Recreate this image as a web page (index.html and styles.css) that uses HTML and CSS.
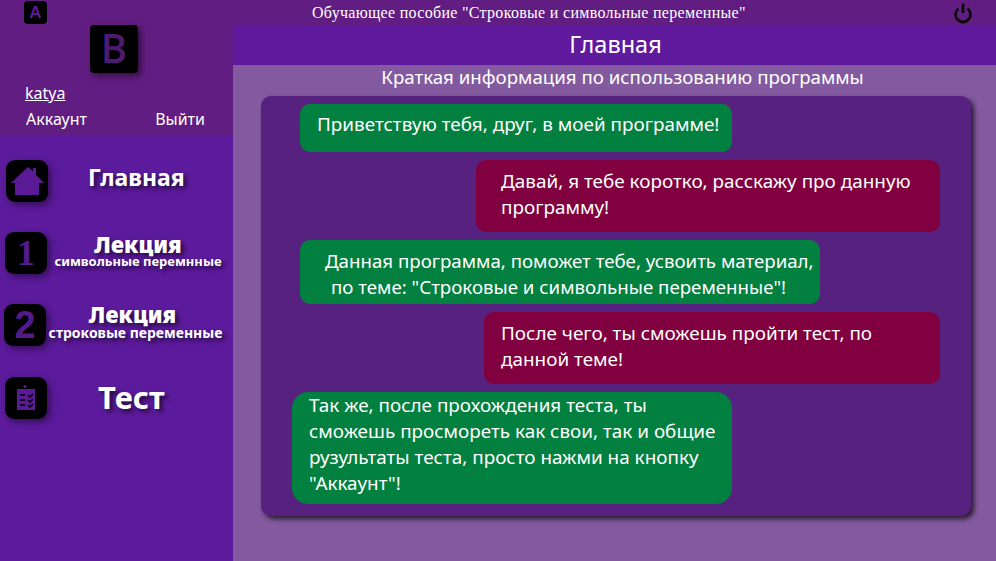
FILE: index.html
```html
<!DOCTYPE html>
<html lang="ru">
<head>
<meta charset="utf-8">
<title>Обучающее пособие</title>
<link rel="stylesheet" href="styles.css">
</head>
<body>
<div class="app">
  <header class="topbar">
    <span class="key key-a">A</span>
    <span class="app-title">Обучающее пособие "Строковые и символьные переменные"</span>
    <svg class="power" viewBox="0 0 20 22" width="20" height="22"><path d="M5.500 6.500A7.500 7.500 0 1 0 14.500 6.500" fill="none" stroke="#0a0a0a" stroke-width="2.800"/><path d="M10 1.500v9.500" stroke="#0a0a0a" stroke-width="2.800"/></svg>
  </header>
  <aside class="sidebar">
    <div class="profile">
      <div class="avatar">B</div>
      <a class="user" href="#">katya</a>
      <div class="profile-links"><span>Аккаунт</span><span>Выйти</span></div>
    </div>
    <nav class="nav">
      <div class="item item-home">
        <span class="tile"><svg viewBox="0 0 42 42" width="42" height="42"><path d="M5 23 22 7l5 4V8h3v7l8 8h-5v12H9V23z" fill="#5a1a96"/></svg></span>
        <span class="label label-main">Главная</span>
      </div>
      <div class="item item-one">
        <span class="tile tile-num serif">1</span>
        <span class="label label-lec"><b>Лекция</b><small>символьные перемнные</small></span>
      </div>
      <div class="item item-two">
        <span class="tile tile-num tile-two">2</span>
        <span class="label label-lec2"><b>Лекция</b><small>строковые переменные</small></span>
      </div>
      <div class="item item-test">
        <span class="tile"><svg viewBox="0 0 42 42" width="42" height="42"><path d="M12 12h18v21H12z" fill="#5a1a96"/><circle cx="20" cy="9.500" r="1.500" fill="#5a1a96"/><path d="M15 18h5M15 23h5M15 28h5M23 18l2 2 3-3M23 23l2 2 3-3M23 28l2 2 3-3" stroke="#000" stroke-width="1.500" fill="none"/></svg></span>
        <span class="label label-test">Тест</span>
      </div>
    </nav>
  </aside>
  <main class="main">
    <h1 class="page-title">Главная</h1>
    <h2 class="subtitle">Краткая информация по использованию программы</h2>
    <section class="chat">
      <p class="msg green m1">Приветствую тебя, друг, в моей программе!</p>
      <p class="msg red m2">Давай, я тебе коротко, расскажу про данную программу!</p>
      <p class="msg green m3">Данная программа, поможет тебе, усвоить материал,<br>по теме: "Строковые и символьные переменные"!</p>
      <p class="msg red m4">После чего, ты сможешь пройти тест, по данной теме!</p>
      <p class="msg green m5"><span>Так же, после прохождения теста, ты<br>сможешь просмореть как свои, так и общие<br>рузультаты теста, просто нажми на кнопку<br>"Аккаунт"!</span></p>
    </section>
  </main>
</div>
</body>
</html>
```
FILE: styles.css
```css
* { box-sizing: border-box; }
html, body { margin: 0; height: 100%; overflow: hidden; }
body { font-family: "Comic Sans MS", "Noto Sans", sans-serif; color: #fff; }
.app {
  width: 996px; height: 561px;
  display: grid;
  grid-template-columns: 233px 1fr;
  grid-template-rows: 25px 1fr;
  background: #835a9f;
}
.topbar {
  grid-column: 1 / 3;
  background: #621d82;
  display: flex; align-items: center;
  position: relative;
  padding: 0 23px 0 24px;
  justify-content: space-between;
}
.key {
  width: 23px; height: 23px;
  background: #000; color: #5a1a96;
  border-radius: 4px;
  font: bold 17px/23px "Liberation Sans", sans-serif;
  text-align: center;
}
.app-title {
  font: 16px/25px "Liberation Serif", serif;
  letter-spacing: .3px;
  position: absolute; left: 312px; top: 0;
}
.power { display: block; }
.sidebar { background: #5c1a9c; display: flex; flex-direction: column; }
.profile { background: #621d82; height: 110px; position: relative; padding: 0 25px; }
.avatar {
  position: absolute; left: 90px; top: 0;
  width: 48px; height: 48px;
  background: #000; color: #4d1a72;
  border-radius: 4px;
  box-shadow: 3px 3px 6px rgba(0,0,0,.5);
  font: 600 40px/46px "Open Sans", sans-serif;
  text-align: center;
}
.user { display: block; padding-top: 57px; color: #fff; font-size: 16px; line-height: 22px; width: max-content; }
.profile-links { display: flex; justify-content: space-between; margin: 5px 0 0 1px; width: 179px; font-size: 16px; line-height: 20px; }
.nav { position: relative; flex: 1; }
.item { display: block; }
.tile {
  position: absolute;
  width: 42px; height: 42px;
  background: #000; color: #531a8c;
  border-radius: 9px;
  box-shadow: 3px 3px 6px rgba(0,0,0,.45);
  display: flex; align-items: center; justify-content: center;
}
.tile svg { display: block; }
.item-home .tile { left: 6px; top: 25px; }
.item-one .tile { left: 5px; top: 97px; }
.item-two .tile { left: 4px; top: 169px; }
.item-test .tile { left: 5px; top: 242px; }
.tile-num { font: bold 36px/42px "Liberation Sans", sans-serif; }
.tile-two { font-size: 38px; }
.serif { font-family: "Liberation Serif", serif; }
.label {
  position: absolute;
  display: flex; flex-direction: column; align-items: center;
  font-weight: bold;
  text-shadow: 3px 3px 4px rgba(0,0,0,.6);
  white-space: nowrap;
}
.label b { font-size: 22px; line-height: 24px; }
.label small { font-weight: bold; font-size: 13px; line-height: 11px; }
.label-main { left: 88px; top: 26px; font-size: 23px; line-height: 32px; }
.label-lec { left: 53px; width: 170px; top: 97px; }
.label-lec2 { left: 48px; width: 175px; top: 167px; }
.label-lec2 b { padding-right: 6px; }
.label-lec2 small { font-size: 14px; margin-top: 1px; }
.label-test { left: 98px; top: 243px; font-size: 31px; line-height: 38px; }
.main { display: flex; flex-direction: column; min-height: 0; }
.page-title {
  margin: 0; height: 40px;
  background: #5f1a9e;
  font-size: 23.500px; font-weight: normal; line-height: 38px;
  text-align: center;
  padding-left: 2px;
}
.subtitle {
  margin: 0; height: 31px;
  font-size: 18.700px; font-weight: normal; line-height: 24px;
  text-align: center;
  padding-left: 16px;
}
.chat {
  margin-left: 28px; width: 710px; height: 420px;
  background: #57217f;
  border-radius: 10px;
  box-shadow: 3px 3px 5px rgba(0,0,0,.7);
  padding-top: 8px;
  display: flex; flex-direction: column; gap: 8px;
}
.msg { margin: 0; font-size: 18.900px; line-height: 26px; border-radius: 10px; }
.green { background: #028040; }
.red { background: #800040; }
.m1 { margin-left: 39px; width: 432px; height: 48px; padding: 7px 0 0 17px; }
.m2 { margin-left: 215px; width: 464px; height: 72px; padding: 8px 25px; }
.m3 { margin-left: 39px; width: 520px; height: 64px; padding: 8px 0 0 31px; text-indent: -6px; font-size: 18.700px; }
.m4 { margin-left: 223px; width: 456px; height: 72px; padding: 8px 17px; }
.m5 { margin-left: 31px; width: 440px; height: 112px; padding: 0 0 8px 17px; border-radius: 16px; display: flex; align-items: center; white-space: nowrap; }
```
